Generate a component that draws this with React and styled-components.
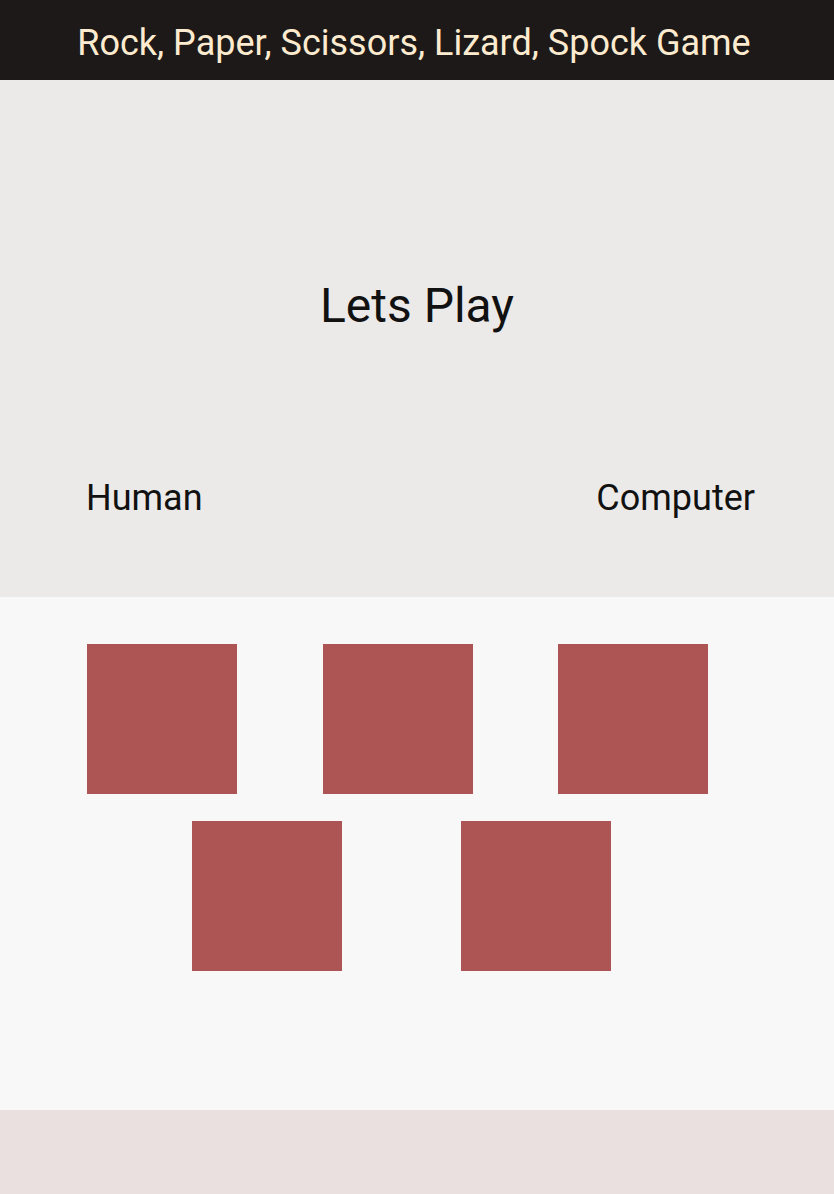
import React from 'react';
import styled, { createGlobalStyle } from 'styled-components';

const GlobalStyle = createGlobalStyle`
  body {
    margin: 0;
    font-family: Roboto, "Liberation Sans", sans-serif;
    background-color: #f8f8f8;
  }
`;

const Page = styled.div`
  display: flex;
  flex-direction: column;
  min-height: 1194px;
`;

const Header = styled.header`
  height: 80px;
  box-sizing: border-box;
  padding: 23px 6px 0 0;
  background-color: #1c1918;
  text-align: center;
`;

const HeaderTitle = styled.h1`
  margin: 0;
  font-size: 36px;
  font-weight: 400;
  color: #fdebd0;
  line-height: 40px;
`;

const Stage = styled.section`
  height: 517px;
  box-sizing: border-box;
  background-color: #eceae8;
  display: flex;
  flex-direction: column;
  padding-top: 197px;
`;

const Title = styled.div`
  font-size: 48px;
  line-height: 58px;
  text-align: center;
  color: #111;
`;

const Players = styled.div`
  margin-top: 143px;
  display: flex;
  justify-content: space-between;
  padding: 0 79px 0 86px;
`;

const Player = styled.div`
  font-size: 36px;
  line-height: 40px;
  color: #111;
`;

const Board = styled.section`
  height: 513px;
  box-sizing: border-box;
  background-color: #f8f8f8;
  padding-top: 47px;
  display: flex;
  flex-direction: column;
  gap: 27px;
`;

const Row = styled.div`
  display: flex;
  padding-left: ${(p) => p.$offset}px;
  gap: ${(p) => p.$gap}px;
`;

const Choice = styled.button`
  width: 150px;
  height: 150px;
  border: none;
  padding: 0;
  background-color: #ad5454;
  cursor: pointer;
`;

const Footer = styled.footer`
  flex: 1;
  background-color: #eae0df;
`;

export default function App() {
  return (
    <>
      <GlobalStyle />
      <Page>
        <Header>
          <HeaderTitle>Rock, Paper, Scissors, Lizard, Spock Game</HeaderTitle>
        </Header>
        <Stage>
          <Title>Lets Play</Title>
          <Players>
            <Player>Human</Player>
            <Player>Computer</Player>
          </Players>
        </Stage>
        <Board>
          <Row $offset={87} $gap={85.5}>
            <Choice aria-label="rock" />
            <Choice aria-label="paper" />
            <Choice aria-label="scissors" />
          </Row>
          <Row $offset={192} $gap={119}>
            <Choice aria-label="lizard" />
            <Choice aria-label="spock" />
          </Row>
        </Board>
        <Footer />
      </Page>
    </>
  );
}
